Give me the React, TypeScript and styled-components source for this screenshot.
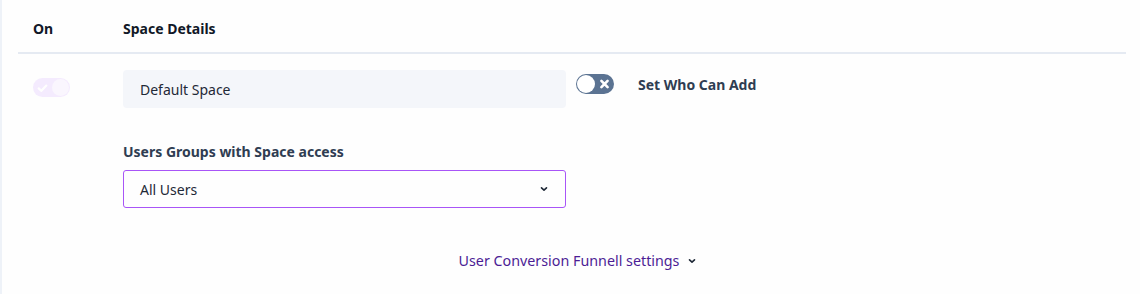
import React from 'react';
import styled, { createGlobalStyle } from 'styled-components';

const GlobalStyle = createGlobalStyle`
  body {
    margin: 0;
    background: #fefefe;
    font-family: 'Noto Sans', 'Open Sans', sans-serif;
    color: #1e293b;
  }
`;

const Page = styled.div`
  height: 294px;
  border-left: 2px solid #eef2f8;
  padding: 0 14px 0 16px;
  box-sizing: border-box;
`;

const Table = styled.div`
  display: grid;
  grid-template-columns: 90px 1fr;
`;

const HeadCell = styled.div`
  height: 54px;
  display: flex;
  align-items: center;
  padding: 4px 15px 0;
  box-sizing: border-box;
  font-size: 14px;
  font-weight: 700;
  color: #111827;
  border-bottom: 2px solid #e5eaf2;
`;

const Cell = styled.div`
  padding: 16px 15px 0;
`;

const ToggleCell = styled(Cell)`
  padding-top: 24px;
`;

const Switch = styled.div<{ $on?: boolean; $faded?: boolean }>`
  position: relative;
  width: ${p => (p.$on ? 37 : 38)}px;
  height: ${p => (p.$on ? 19 : 20)}px;
  border-radius: 10px;
  background: ${p => (p.$on ? '#f3e8ff' : '#5b7392')};
  opacity: ${p => (p.$faded ? 0.85 : 1)};
  flex-shrink: 0;
  display: flex;
  align-items: center;
`;

const Knob = styled.span<{ $right?: boolean }>`
  position: absolute;
  top: 1px;
  ${p => (p.$right ? 'right: 1px;' : 'left: 1px;')}
  width: ${p => (p.$right ? 17 : 18)}px;
  height: ${p => (p.$right ? 17 : 18)}px;
  border-radius: 50%;
  background: ${p => (p.$right ? '#faf5ff' : '#ffffff')};
`;

const SwitchIcon = styled.svg<{ $right?: boolean }>`
  position: absolute;
  top: 50%;
  transform: translateY(-50%);
  ${p => (p.$right ? 'right: 4px;' : 'left: 4px;')}
`;

const DetailRow = styled.div`
  display: flex;
  align-items: flex-start;
  gap: 10px;
`;

const TextBox = styled.div`
  width: 443px;
  height: 38px;
  border-radius: 4px;
  background: #f4f6fa;
  display: flex;
  align-items: center;
  padding: 0 17px;
  box-sizing: border-box;
  font-size: 14px;
  color: #1f2937;
`;

const WhoCanAdd = styled.div`
  display: flex;
  align-items: center;
  gap: 24px;
  padding-top: 4px;
  font-size: 14px;
  font-weight: 700;
  color: #2f3d52;
`;

const Label = styled.div`
  margin-top: 34px;
  margin-bottom: 9px;
  font-size: 14px;
  font-weight: 700;
  color: #2f3d52;
`;

const Select = styled.div`
  width: 443px;
  height: 38px;
  border: 1.5px solid #a855f7;
  border-radius: 3px;
  display: flex;
  align-items: center;
  justify-content: space-between;
  padding: 0 16px;
  box-sizing: border-box;
  font-size: 14px;
  color: #1f2937;
`;

const FunnelLink = styled.div`
  grid-column: 1 / -1;
  display: flex;
  justify-content: center;
  align-items: center;
  gap: 8px;
  margin-top: 43px;
  padding-left: 12px;
  font-size: 14.3px;
  color: #4c1d95;
`;

const Chevron = ({ color = '#1f2937' }: { color?: string }) => (
  <svg width="10" height="10" viewBox="0 0 10 10">
    <path d="M2.5 3.8 L5 6.2 L7.5 3.8" fill="none" stroke={color} strokeWidth="1.6" strokeLinecap="round" strokeLinejoin="round" />
  </svg>
);

export default function App() {
  return (
    <>
      <GlobalStyle />
      <Page>
        <Table>
          <HeadCell>On</HeadCell>
          <HeadCell>Space Details</HeadCell>

          <ToggleCell>
            <Switch $on $faded>
              <SwitchIcon width="11" height="11" viewBox="0 0 10 10">
                <path d="M1.5 5.4 L4 7.6 L8.5 2.8" fill="none" stroke="#ffffff" strokeWidth="2" strokeLinecap="round" strokeLinejoin="round" />
              </SwitchIcon>
              <Knob $right />
            </Switch>
          </ToggleCell>
          <Cell>
            <DetailRow>
              <TextBox>Default Space</TextBox>
              <WhoCanAdd>
                <Switch>
                  <Knob />
                  <SwitchIcon $right width="11" height="11" viewBox="0 0 10 10">
                    <path d="M2.2 2.2 L7.8 7.8 M7.8 2.2 L2.2 7.8" stroke="#ffffff" strokeWidth="2.4" strokeLinecap="round" />
                  </SwitchIcon>
                </Switch>
                Set Who Can Add
              </WhoCanAdd>
            </DetailRow>
            <Label>Users Groups with Space access</Label>
            <Select>
              All Users
              <Chevron />
            </Select>
          </Cell>

          <FunnelLink>
            User Conversion Funnell settings
            <Chevron color="#1f2937" />
          </FunnelLink>
        </Table>
      </Page>
    </>
  );
}
